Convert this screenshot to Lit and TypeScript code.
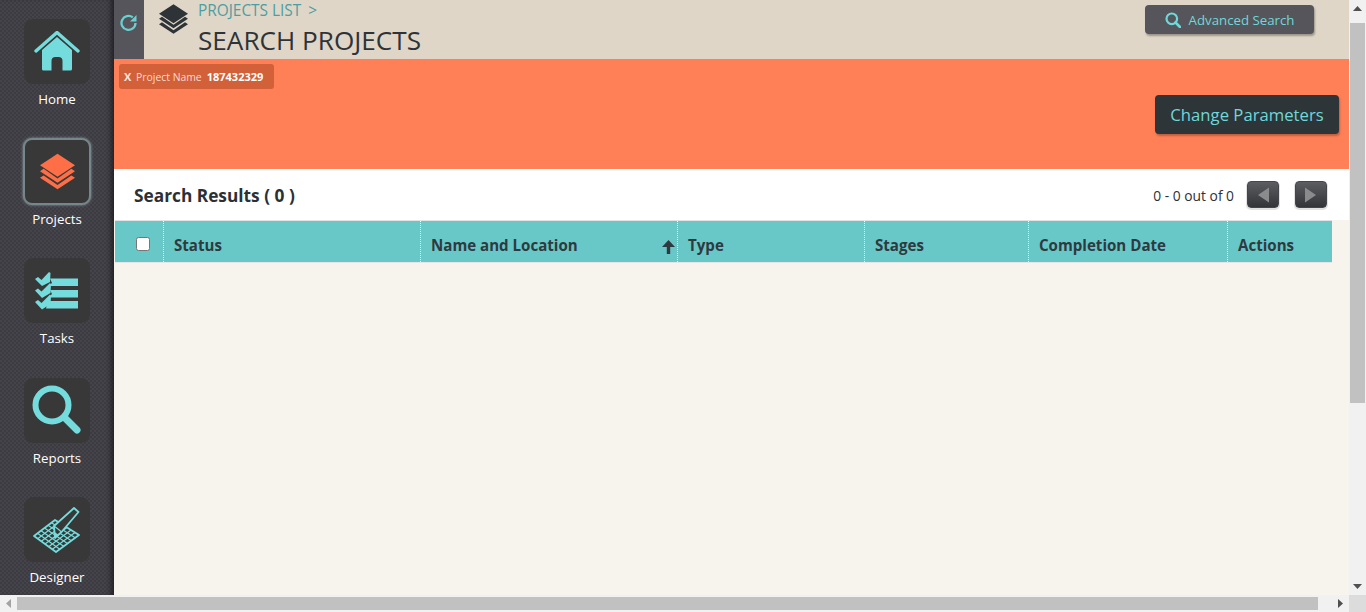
import { LitElement, html, css, svg } from "lit";
import { customElement } from "lit/decorators.js";

const layers = (c: string) => svg`<path fill="${c}" d="M14.5 0 L29 9.5 L14.5 19 L0 9.5Z"/><path fill="${c}" d="M0 14.5 L3 12.5 L14.5 20.5 L26 12.5 L29 14.5 L14.5 24Z"/><path fill="${c}" d="M0 20 L3 18 L14.5 26 L26 18 L29 20 L14.5 29.5Z"/>`;

const lerp = (a: number[], b: number[], t: number) => [a[0] + (b[0] - a[0]) * t, a[1] + (b[1] - a[1]) * t];
const A = [1, 29], B = [22, 13], C = [46, 28], D = [23, 45];
const gridLines = () => {
  let d = "";
  for (let i = 1; i < 6; i++) {
    const t = i / 6;
    const p = lerp(A, B, t), q = lerp(D, C, t), r = lerp(A, D, t), s = lerp(B, C, t);
    d += `M${p[0]} ${p[1]} L${q[0]} ${q[1]} M${r[0]} ${r[1]} L${s[0]} ${s[1]} `;
  }
  return d;
};

@customElement("app-root")
export class AppRoot extends LitElement {
  static styles = css`
    :host { display: grid; grid-template-columns: 1349px 17px; grid-template-rows: 595px 17px; width: 1366px; height: 612px; overflow: hidden; font-family: "Open Sans", sans-serif; background: #f1f1f1; }
    .page { display: flex; min-width: 0; height: 595px; overflow: hidden; }
    .side { width: 114px; flex: none; box-sizing: border-box; padding-top: 19px; display: flex; flex-direction: column; align-items: center; background-color: #45444b;
      background-image: linear-gradient(45deg, #3c3b41 25%, transparent 25%, transparent 75%, #3c3b41 75%), linear-gradient(45deg, #3c3b41 25%, transparent 25%, transparent 75%, #3c3b41 75%); background-size: 4px 4px; background-position: 0 0, 2px 2px; box-shadow: inset -6px 0 5px -3px #222226; }
    .nav { width: 114px; height: 119.5px; flex: none; display: flex; flex-direction: column; align-items: center; color: #fff; font-size: 13.3px; line-height: 19px; }
    .tile { width: 66px; height: 65px; border-radius: 9px; background: #383838; display: flex; align-items: center; justify-content: center; margin-bottom: 6px; box-sizing: border-box; }
    .nav.on .tile { border: 2px solid #76868a; box-shadow: 0 0 3px #8a9a9e; width: 68px; height: 67px; margin-top: -1px; margin-bottom: 5px; }
    .main { flex: 1; min-width: 0; display: flex; flex-direction: column; background: #f7f4ed; }
    .head { height: 59px; flex: none; display: flex; background: #dfd6c7; }
    .refresh { width: 30px; background: #56555b; display: flex; justify-content: center; padding-top: 14px; box-sizing: border-box; }
    .logo { margin: 4px 0 0 15px; flex: none; width: 29px; }
    .crumbs { margin-left: 10px; flex: 1; }
    .crumb { font-size: 15.4px; line-height: 20px; height: 20px; margin-top: 1px; color: #4d9ea2; }
    .crumb span { margin-left: 3px; }
    h1 { margin: 2px 0 0; font-weight: 400; font-size: 26.15px; line-height: 34px; color: #2e3338; }
    .adv { margin: 5px 35px 0 0; width: 169px; height: 29px; border-radius: 4px; background: #56555b; color: #6fd8d8; font-size: 13.25px; display: flex; align-items: center; justify-content: center; gap: 8px; box-shadow: 1px 2px 2px #9c958a; }
    .orange { height: 110px; flex: none; background: #ff7f57; display: flex; justify-content: space-between; align-items: flex-start; }
    .chip { margin: 5px 0 0 5px; height: 25px; width: 155px; box-sizing: border-box; padding-left: 5px; border-radius: 3px; background: #d26039; color: #ffd9c9; font-size: 10.4px; display: flex; align-items: center; }
    .chip b { color: #ffe6dc; font-size: 11px; margin-right: 2px; }
    .chip strong { color: #fff; margin-left: 5px; font-size: 11px; font-weight: 700; }
    .change { margin: 36px 10px 0 0; width: 184px; height: 39px; border-radius: 4px; background: #2e3539; color: #6fd8d8; font-size: 16.7px; display: flex; align-items: center; justify-content: center; box-shadow: 1px 2px 2px #c0603f; }
    .results { height: 51px; flex: none; background: #fff; display: flex; align-items: center; padding: 2px 22px 0 20px; box-sizing: border-box; }
    .results h2 { margin: 0; flex: 1; font-size: 17.3px; font-weight: 700; color: #2b3036; }
    .count { font-size: 13.8px; color: #2b3036; margin-right: 13px; }
    .pg { width: 32px; height: 27px; margin-top: -2px; border-radius: 4px; background: linear-gradient(#5c5d60, #333538); border: 1px solid #45464a; box-shadow: 0 1px 0 1px #e2e2e2; box-sizing: border-box; display: flex; align-items: center; justify-content: center; }
    .pg + .pg { margin-left: 16px; }
    .thead { margin: 0 17px 0 1px; height: 43px; flex: none; background: #68c8c8; display: grid; grid-template-columns: 48px 257px 257px 187px 164px 199px 105px; border-top: 1px solid #e2e2e2; border-bottom: 1px solid #e6e6e6; box-sizing: border-box; }
    .th { font-size: 15.1px; font-weight: 700; color: #2f3a40; display: flex; align-items: center; padding: 7px 0 0 10px; box-sizing: border-box; border-left: 1px dotted #fff; position: relative; }
    .th:first-child { border-left: 0; padding: 5px 0 0 21px; }
    .box { width: 14px; height: 14px; border: 1px solid #767676; border-radius: 2.5px; background: #fff; box-sizing: border-box; }
    .sort { position: absolute; right: 2px; top: 19px; }
    .vbar { background: #f1f1f1; display: flex; flex-direction: column; align-items: center; }
    .vbar .thumb { width: 15px; height: 380px; flex: none; background: #c1c1c1; margin: 6px 0 auto; }
    .ar { flex: none; height: 17px; display: flex; align-items: center; justify-content: center; }
    .hbar { background: #f1f1f1; display: flex; align-items: center; }
    .hbar .thumb { width: 1301px; height: 13px; background: #c1c1c1; flex: none; }
    .hbar .ar { width: 17px; flex: none; }
    .spacer { flex: 1; }
    .corner { background: #dcdcdc; }
  `;

  private nav(label: string, icon: unknown, on = false) {
    return html`<div class="nav ${on ? "on" : ""}"><div class="tile">${icon}</div>${label}</div>`;
  }

  render() {
    const teal = "#74dcdc";
    return html`
      <div class="page">
        <aside class="side">
          ${this.nav("Home", svg`<svg width="46" height="42" viewBox="0 0 46 42"><path fill="none" stroke="${teal}" stroke-width="3.4" stroke-linecap="round" d="M2 20 L23 1.5 L44 20"/><path fill="${teal}" d="M8 19 L23 6 L38 19 V38 a1.5 1.5 0 0 1-1.5 1.5 H28.5 V30 a4 4 0 0 0-4-4 h-3 a4 4 0 0 0-4 4 V39.5 H9.5 A1.5 1.5 0 0 1 8 38Z"/></svg>`)}
          ${this.nav("Projects", svg`<svg width="35" height="37" viewBox="0 0 29 29.5">${layers("#ff6f47")}</svg>`, true)}
          ${this.nav("Tasks", svg`<svg width="44" height="38" viewBox="0 0 44 38"><g fill="${teal}"><path d="M15 6.5 H43 V14 H13 L17 11Z"/><path d="M15 18 H43 V25.5 H13 L17 22Z"/><path d="M13 29 H43 V36.5 H11 Z"/><path d="M0 7 L3 5 L6.5 8 L14 0 L15.5 1 L15 10 L7 14Z"/><path d="M0 18.5 L3 16.5 L6.5 19.5 L15 11 L16 12.5 L15.5 21 L7 26Z"/><path d="M0 30 L3 28 L6.5 31 L15 22.5 L16 24 L15.5 32 L7 37.5Z"/></g></svg>`)}
          ${this.nav("Reports", svg`<svg width="50" height="50" viewBox="0 0 50 50"><circle cx="20" cy="20" r="16.5" fill="none" stroke="${teal}" stroke-width="6"/><path d="M32.5 32.5 L45 45" stroke="${teal}" stroke-width="7" stroke-linecap="round"/></svg>`)}
          ${this.nav("Designer", svg`<svg width="48" height="46" viewBox="0 0 48 46"><path d="M1 29 L22 13 L46 28 L23 45Z" fill="#383838" stroke="${teal}" stroke-width="1.8" stroke-linejoin="round"/><path d="${gridLines()}" fill="none" stroke="${teal}" stroke-width="1.2"/><path d="M22 31 L21 19 L41 1 L45.5 5 L28.5 25Z" fill="#383838" stroke="${teal}" stroke-width="1.8" stroke-linejoin="round"/><path d="M21 19 L25 22 L28.5 25" fill="none" stroke="${teal}" stroke-width="1.2"/><path d="M22 31 L21.5 25 L26 28Z" fill="${teal}"/></svg>`)}
        </aside>
        <main class="main">
          <header class="head">
            <div class="refresh"><svg width="18" height="18" viewBox="0 0 18 18"><path d="M15.5 9 A7 7 0 1 1 12.8 3.4" fill="none" stroke="#68d0d0" stroke-width="2.3"/><path d="M16.5 1 V7.5 H10Z" fill="#68d0d0"/></svg></div>
            <div class="logo"><svg width="29" height="30" viewBox="0 0 29 29.5">${layers("#2e3338")}</svg></div>
            <div class="crumbs">
              <div class="crumb">PROJECTS LIST <span>&gt;</span></div>
              <h1>SEARCH PROJECTS</h1>
            </div>
            <div class="adv"><svg width="16" height="16" viewBox="0 0 16 16"><circle cx="6.8" cy="6.8" r="5.3" fill="none" stroke="#6fd8d8" stroke-width="2.2"/><path d="M10.5 10.5 L15 15" stroke="#6fd8d8" stroke-width="2.6" stroke-linecap="round"/></svg>Advanced Search</div>
          </header>
          <section class="orange">
            <div class="chip"><b>X</b>&nbsp;Project Name<strong>187432329</strong></div>
            <div class="change">Change Parameters</div>
          </section>
          <section class="results">
            <h2>Search Results ( 0 )</h2>
            <span class="count">0 - 0 out of 0</span>
            <div class="pg"><svg width="14" height="16"><path d="M13 0.5 V15.5 L2 8Z" fill="#8a8b8c"/></svg></div>
            <div class="pg"><svg width="14" height="16"><path d="M1 0.5 V15.5 L12 8Z" fill="#8a8b8c"/></svg></div>
          </section>
          <div class="thead">
            <div class="th"><div class="box"></div></div>
            <div class="th">Status</div>
            <div class="th">Name and Location<svg class="sort" width="13" height="14" viewBox="0 0 13 14"><path d="M6.5 0 L13 7 H8.2 V14 H4.8 V7 H0Z" fill="#2f3a40"/></svg></div>
            <div class="th">Type</div>
            <div class="th">Stages</div>
            <div class="th">Completion Date</div>
            <div class="th">Actions</div>
          </div>
        </main>
      </div>
      <div class="vbar">
        <div class="ar"><svg width="9" height="5"><path d="M4.5 0 L9 5 H0Z" fill="#505050"/></svg></div>
        <div class="thumb"></div>
        <div class="ar"><svg width="9" height="5"><path d="M0 0 H9 L4.5 5Z" fill="#505050"/></svg></div>
      </div>
      <div class="hbar">
        <div class="ar"><svg width="5" height="9"><path d="M5 0 V9 L0 4.5Z" fill="#a3a3a3"/></svg></div>
        <div class="thumb"></div>
        <div class="spacer"></div>
        <div class="ar"><svg width="5" height="9"><path d="M0 0 V9 L5 4.5Z" fill="#505050"/></svg></div>
      </div>
      <div class="corner"></div>
    `;
  }
}
